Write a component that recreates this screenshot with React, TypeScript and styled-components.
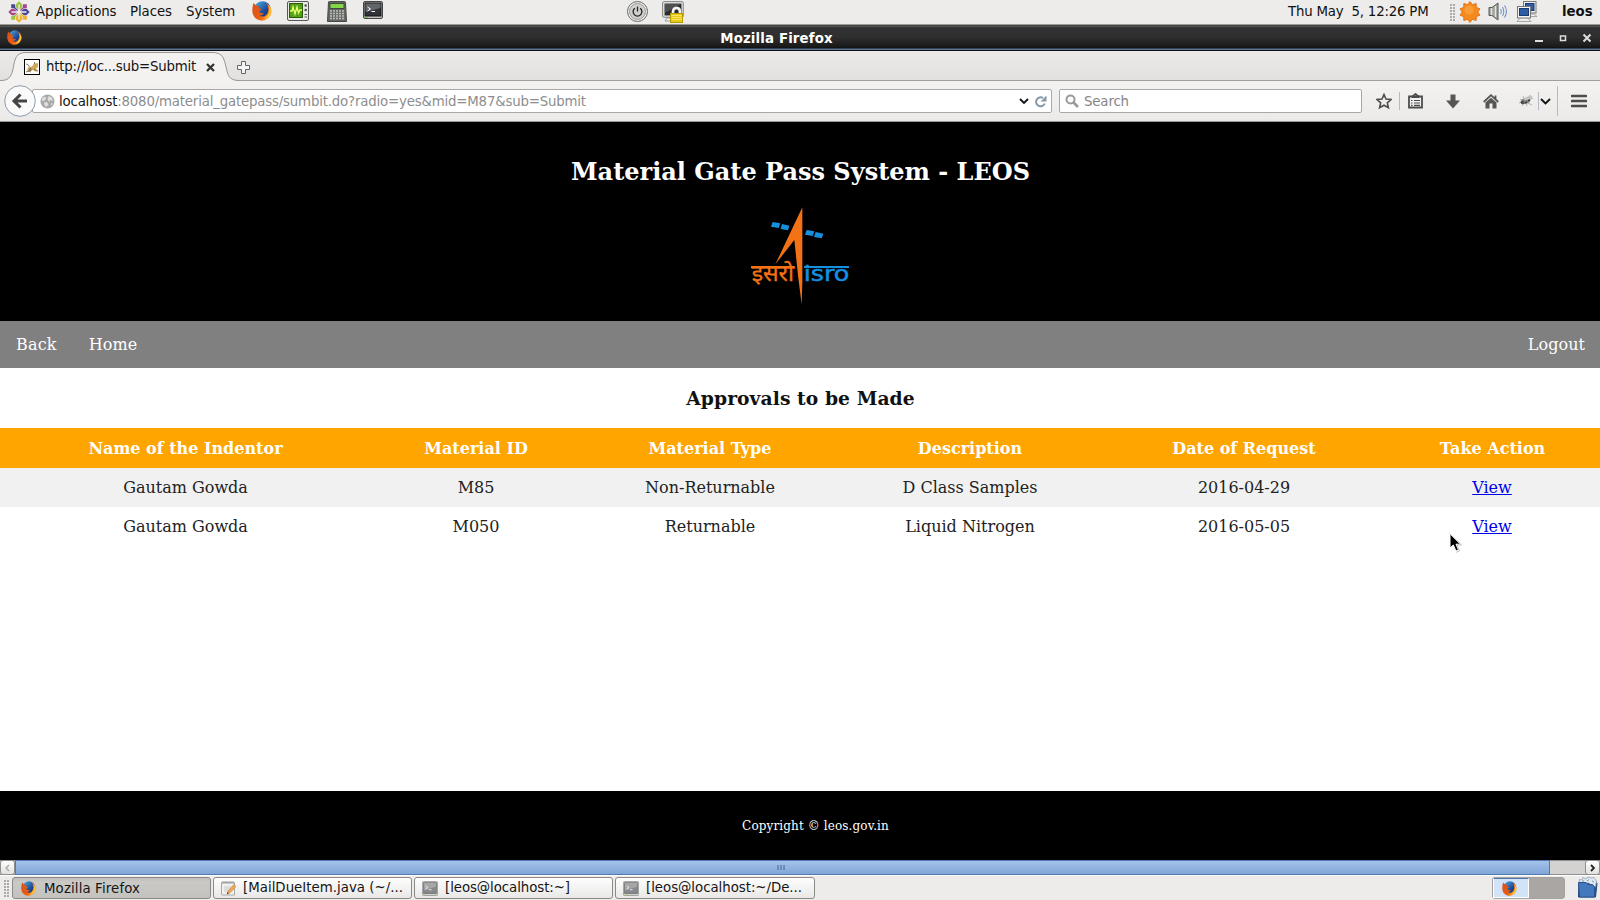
import React from "react";
import styled, { createGlobalStyle } from "styled-components";

const Global = createGlobalStyle`
  * { box-sizing: border-box; }
  body { margin: 0; overflow: hidden; background: #fff; }
`;

const Desktop = styled.div`
  position: relative;
  width: 1600px;
  height: 900px;
  display: flex;
  flex-direction: column;
  overflow: hidden;
  font-family: "DejaVu Sans", sans-serif;
  font-size: 13.33px;
  color: #1a1a1a;
  svg { display: block; flex: none; }
`;

const Label = styled.span<{ $ls?: number }>`
  white-space: pre;
  letter-spacing: ${(p) => p.$ls ?? 0}px;
`;

const Gap = styled.div<{ $w: number }>`
  flex: none;
  width: ${(p) => p.$w}px;
`;

/* ---------- desktop panel ---------- */
const TopPanel = styled.div`
  height: 25px;
  flex: none;
  display: flex;
  align-items: flex-start;
  justify-content: space-between;
  background: #edeceb;
  border-bottom: 1px solid #9b9b97;
  line-height: 24px;
`;
const PanelGroup = styled.div`
  display: flex;
  height: 24px;
  align-items: flex-start;
  svg { margin-top: 1px; }
`;
const MenuItem = styled.div<{ $w: number; $ls?: number }>`
  width: ${(p) => p.$w}px;
  letter-spacing: ${(p) => p.$ls ?? -0.08}px;
  flex: none;
  white-space: pre;
  color: #111;
`;
const UserName = styled.div`
  font-weight: bold;
  color: #111;
  width: 38px;
`;
const Grip = styled.div`
  width: 5px;
  height: 17px;
  margin-top: 4px;
  background-image: radial-gradient(circle at 1px 1px, #aaa 0.8px, transparent 1px);
  background-size: 3px 3px;
`;

/* ---------- window ---------- */
const TitleBar = styled.div`
  height: 26px;
  flex: none;
  display: flex;
  align-items: center;
  position: relative;
  padding-left: 7px;
  background: linear-gradient(#1d1d1d 0, #6a6a68 1px, #3a3a3a 2px, #313131 3px, #2f2f2f 12px, #191919 22px, #0d0f12 23px, #5b7594 24px, #5b7594 25px);
  border-bottom: 1px solid #0c1118;
`;
const WindowTitle = styled.div`
  flex: 1;
  text-align: center;
  color: #fff;
  font-weight: bold;
  line-height: 24px;
  letter-spacing: 0.14px;
  padding: 2px 0 0 5px;
`;
const Controls = styled.div`
  display: flex;
  width: 74px;
`;
const TabBar = styled.div`
  height: 30px;
  flex: none;
  position: relative;
  display: flex;
  background: linear-gradient(#ebeae9, #e2e1e0);
  border-bottom: 1px solid #a09f9d;
`;
const TabShape = styled.div`
  position: absolute;
  left: 0;
  top: 0;
`;
const TabContent = styled.div`
  position: relative;
  display: flex;
  align-items: center;
  height: 30px;
  padding-left: 24px;
  padding-top: 2px;
`;
const TabLabel = styled.div`
  width: 160px;
  margin-left: 6px;
  line-height: 26px;
  letter-spacing: -0.22px;
  color: #151515;
`;
const NavBar = styled.div`
  height: 41px;
  flex: none;
  position: relative;
  display: flex;
  align-items: center;
  background: linear-gradient(#f3f2f1, #eceae8);
  border-bottom: 1px solid #989793;
`;
const BackButton = styled.div`
  position: absolute;
  left: 4px;
  top: 4px;
`;
const UrlBox = styled.div`
  display: flex;
  align-items: center;
  width: 1020px;
  height: 24px;
  margin-left: 32px;
  padding-left: 7px;
  background: #fff;
  border: 1px solid #aaa8a6;
  border-radius: 2px;
  color: #8d8d8d;
  b { font-weight: normal; color: #151515; }
`;
const UrlText = styled.div`
  flex: 1;
  padding: 2px 0 0 4px;
  letter-spacing: -0.182px;
  line-height: 20px;
`;
const SearchBox = styled.div`
  display: flex;
  align-items: center;
  width: 303px;
  height: 24px;
  margin-left: 7px;
  padding-left: 5px;
  gap: 5px;
  background: #fff;
  border: 1px solid #aaa8a6;
  border-radius: 2px;
  color: #858585;
  line-height: 20px;
  letter-spacing: -0.15px;
  span { padding-top: 2px; }
`;
const Divider = styled.div<{ $h: number }>`
  width: 1px;
  height: ${(p) => p.$h}px;
  background: #b5bac0;
`;

/* ---------- page ---------- */
const Page = styled.div`
  height: 738px;
  flex: none;
  display: flex;
  flex-direction: column;
  background: #fff;
  font-family: "DejaVu Serif", serif;
  font-size: 16px;
`;
const Header = styled.header`
  height: 199px;
  flex: none;
  background: #000;
  color: #fff;
  display: flex;
  flex-direction: column;
  align-items: center;
`;
const Title = styled.h1`
  margin: 35px 0 0;
  padding-left: 1px;
  height: 38px;
  font-size: 24px;
  line-height: 30px;
`;
const PageNav = styled.nav`
  height: 47px;
  flex: none;
  display: flex;
  justify-content: space-between;
  padding: 0 15px 0 16px;
  line-height: 48px;
  background: #808080;
  color: #fff;
`;
const NavLinks = styled.div`
  display: flex;
  gap: 32px;
`;
const Subtitle = styled.h3`
  margin: 0;
  height: 60px;
  line-height: 61px;
  text-align: center;
  font-size: 18.72px;
  letter-spacing: 0.07px;
  padding-left: 1px;
  color: #111;
`;
const Table = styled.table`
  width: 1600px;
  table-layout: fixed;
  border-collapse: collapse;
  text-align: center;
  color: #222;
`;
const Th = styled.th<{ $w: number }>`
  width: ${(p) => p.$w}px;
  height: 40px;
  padding: 0;
  background: #ffa500;
  color: #fff;
  &:last-child { padding-right: 2px; }
`;
const Tr = styled.tr<{ $odd: boolean }>`
  background: ${(p) => (p.$odd ? "#f1f1f1" : "#fff")};
`;
const Td = styled.td`
  height: 39px;
  padding: 0 0 1px;
  a { color: #0000ee; text-decoration: underline; }
  &:last-child { padding-right: 3px; }
`;
const Footer = styled.footer`
  height: 69px;
  margin-top: auto;
  background: #000;
  color: #fff;
  text-align: center;
  font-size: 12px;
  line-height: 70px;
  letter-spacing: 0.12px;
  padding-left: 31px;
`;
const Pointer = styled.div`
  position: absolute;
  left: 1449px;
  top: 533px;
`;

/* ---------- bottom ---------- */
const ScrollBar = styled.div`
  height: 15px;
  flex: none;
  display: flex;
  background: #d3d2d0;
  border-top: 1px solid #8f8f8f;
  border-bottom: 1px solid #8f8f8f;
`;
const Arrow = styled.div<{ $dim?: boolean }>`
  width: 15px;
  border: 1px solid #918f8c;
  border-radius: 3px;
  margin: -1px 0;
  background: linear-gradient(#fff, #e2e1e0);
  color: ${(p) => (p.$dim ? "#aaa" : "#222")};
  display: flex;
  align-items: center;
  justify-content: center;
`;
const Thumb = styled.div`
  width: 1535px;
  margin: -1px 0;
  border: 1px solid #5379ad;
  background: linear-gradient(#a5c3ea, #80a6d8);
  display: flex;
  align-items: center;
  justify-content: center;
  padding-right: 3px;
`;
const Track = styled.div`
  flex: 1;
`;
const Taskbar = styled.div`
  height: 25px;
  flex: none;
  display: flex;
  background: #edeceb;
  border-top: 1px solid #fff;
`;
const Task = styled.div<{ $active?: boolean; $w?: number }>`
  display: flex;
  align-items: center;
  width: ${(p) => p.$w ?? 199}px;
  height: 22px;
  margin: 1px 2px 0 0;
  padding-left: ${(p) => (p.$active ? 8 : 7)}px;
  border: 1px solid #8c8a87;
  border-radius: 3px;
  background: ${(p) => (p.$active ? "linear-gradient(#bfbdba, #cbc9c6 4px, #c4c2bf)" : "linear-gradient(#fefefe, #e9e8e7)")};
  color: #151515;
  span { margin-left: ${(p) => (p.$active ? 8 : 7)}px; margin-top: ${(p) => (p.$active ? 0 : -2)}px; }
`;
const Workspaces = styled.div`
  display: flex;
  width: 73px;
  height: 22px;
  margin: 1px 12px 0 auto;
  border: 1px solid #a5a29f;
  border-radius: 3px;
  background: #aaa6a3;
`;
const ActiveWorkspace = styled.div`
  width: 36px;
  background: #d2e2f7;
  border: 1px solid #fff;
  border-top-color: #4f78b0;
  display: flex;
  align-items: center;
  justify-content: center;
  padding-right: 4px;
`;

/* ---------- icons ---------- */
const Firefox = ({ size }: { size: number }) => (
  <svg width={size} height={size} viewBox="0 0 20 20">
    <defs>
      <linearGradient id="fxo" x1="0" y1="0.2" x2="1" y2="0.8">
        <stop offset="0" stopColor="#d9531a" />
        <stop offset=".55" stopColor="#ea5c12" />
        <stop offset="1" stopColor="#ffb52a" />
      </linearGradient>
      <linearGradient id="fxb" x1="0" y1="0" x2="1" y2="1">
        <stop offset="0" stopColor="#4fb2e4" />
        <stop offset=".6" stopColor="#1c4c9a" />
        <stop offset="1" stopColor="#0c2560" />
      </linearGradient>
    </defs>
    <circle cx="10.500" cy="8.400" r="8.200" fill="url(#fxb)" />
    <path d="M1.500 2Q3 3 4 4.800Q5.800 4.200 7.300 5.300L6.300 7.200Q9 7.200 9.500 8.300L7 10Q7.500 12.800 12 12Q10.500 15 7.500 13.900Q10.500 17 14 14.300Q17.300 11 16 6Q15.500 3.500 14 2Q17.600 3.500 19 7.500Q20.600 13 16.500 17Q11.500 21.400 5.500 18.500Q.3 15.500 .3 9.500Q.3 5.500 1.500 2Z" fill="url(#fxo)" />
    <path d="M16 3.500Q20.300 8 18.300 13Q16.400 17.600 11.500 18.400Q16 15.600 17.300 11Q17.800 7.500 16 3.500Z" fill="#ffcb35" />
  </svg>
);

const quarters = [
  { corner: "#a6458f", arrow: "#9bc43c" },
  { corner: "#f0b02c", arrow: "#4a4796" },
  { corner: "#9bc43c", arrow: "#f0b02c" },
  { corner: "#4a4796", arrow: "#a6458f" },
];
const CentOS = () => (
  <svg width="22" height="22" viewBox="-11 -11 22 22">
    {quarters.map((q, i) => (
      <g key={i} transform={`rotate(${i * 90})`}>
        <path d="M4 -7.800H7.800V-4L4.800 -3.800L1.800 -1L1 -1.800L3.800 -4.800Z" fill={q.corner} />
        <path d="M-3.200 -7.500L0 -10.700L3.200 -7.500V-5L.7 -2V-7.500H-.7V-2L-3.200 -5Z" fill={q.arrow} />
      </g>
    ))}
  </svg>
);

const MonitorIcon = () => (
  <svg width="22" height="21" viewBox="0 0 22 21">
    <rect x=".5" y=".5" width="21" height="19" rx="1.500" fill="#e9e9e5" stroke="#555753" />
    <rect x="2.500" y="2.500" width="13" height="14" fill="#4b9b12" stroke="#2f5c0c" />
    <path d="M3 6H15M3 9.500H15M3 13H15M6 3V16M9 3V16M12 3V16" stroke="#72bb35" strokeWidth=".6" />
    <path d="M3 10H5L6 6L8 13L10 6L11.500 12L13 9H15" fill="none" stroke="#eaff70" strokeWidth="1.300" />
    <circle cx="18.700" cy="4.500" r="1.300" fill="#555" /><circle cx="18.700" cy="9" r="1.300" fill="#555" />
    <path d="M17.500 13.500H20M17.500 16H20" stroke="#555" strokeWidth="1.200" />
  </svg>
);

const Calculator = () => (
  <svg width="20" height="21" viewBox="0 0 20 21">
    <path d="M1.500 1Q1.500 .5 2.500 .5H17.500Q18.500 .5 18.500 1.500L19.500 20.500H.5Z" fill="#666864" stroke="#464844" />
    <rect x="3" y="2.500" width="14" height="5" fill="#83d747" stroke="#40463b" />
    {[10, 12.500, 15, 17.500].map((y) => (
      <path key={y} d={`M3 ${y}H17.500`} stroke="#bdbfba" strokeWidth="1.400" strokeDasharray="2 1" />
    ))}
  </svg>
);

const Terminal = ({ w = 20, h = 18, dim = false }: { w?: number; h?: number; dim?: boolean }) => (
  <svg width={w} height={h} viewBox="0 0 20 18" preserveAspectRatio="none" opacity={dim ? 0.55 : 1}>
    <rect x=".5" y=".5" width="19" height="17" rx="1.500" fill="#c3c4c0" stroke="#444" />
    <rect x="2" y="2" width="16" height="13" fill="#30343a" stroke="#111" />
    <path d="M2.500 2.500H17.500V7L2.500 11Z" fill="#62666a" />
    <path d="M4.500 6L7.500 8L4.500 10M8.500 10.500H12" fill="none" stroke="#fff" />
    <path d="M2 16.500H5" stroke="#73d216" />
  </svg>
);

const Power = () => (
  <svg width="21" height="22" viewBox="0 0 21 22">
    <circle cx="10.500" cy="10.500" r="10" fill="#f1f1ef" stroke="#666" />
    <circle cx="10.500" cy="10.500" r="8" fill="#cfcfcd" stroke="#999" />
    <path d="M7.800 7.200A4.400 4.400 0 1 0 13.200 7.200M10.500 5.500V10.500" fill="none" stroke="#222" strokeWidth="1.300" />
  </svg>
);

const LockScreen = () => (
  <svg width="22" height="22" viewBox="0 0 22 22">
    <path d="M5 17H15L17 20H3Z" fill="#f4f4f2" stroke="#999" />
    <rect x=".7" y=".7" width="20.500" height="15.500" rx="1" fill="#f2f2f2" stroke="#777" />
    <rect x="2.500" y="2.500" width="17" height="12" fill="#2b2b2b" />
    <path d="M3 3H19L3 12Z" fill="#505050" />
    <path d="M11 13V11Q11 7 14.500 7T18 11V13" fill="none" stroke="#777" strokeWidth="3.200" />
    <path d="M11 13V11Q11 7 14.500 7T18 11V13" fill="none" stroke="#f4f4f4" strokeWidth="2.400" />
    <rect x="8.500" y="12.500" width="12" height="9" fill="#e9cb16" stroke="#b89b00" />
    <path d="M9.500 14.500H19.500M9.500 16.500H19.500M9.500 18.500H19.500" stroke="#fff08a" strokeWidth=".7" />
  </svg>
);

const sunPoints = Array.from({ length: 20 }, (_, i) => {
  const r = i % 2 ? 7.8 : 10.5;
  const a = (i * Math.PI) / 10;
  return `${(11 + r * Math.sin(a)).toFixed(1)},${(11 - r * Math.cos(a)).toFixed(1)}`;
}).join(" ");
const Sun = () => (
  <svg width="22" height="22" viewBox="0 0 22 22">
    <polygon points={sunPoints} fill="#f58a1f" stroke="#d9690b" strokeWidth=".8" />
    <circle cx="10" cy="9" r="4.500" fill="#fba445" opacity=".7" />
  </svg>
);

const Speaker = () => (
  <svg width="20" height="21" viewBox="0 0 20 21">
    <path d="M1 6.500H4L10 2V19L4 14.500H1Z" fill="#a2a49f" stroke="#555753" />
    <path d="M3.500 7V14M7.500 5V16" stroke="#e6e6e4" strokeWidth="1.300" />
    <path d="M12.500 8Q14 10.500 12.500 13M14.500 6Q17 10.500 14.500 15M16.500 4.500Q20.500 10.500 16.500 16.500" fill="none" stroke="#7296c8" strokeWidth="1.100" />
  </svg>
);

const Network = () => (
  <svg width="22" height="22" viewBox="0 0 22 22">
    <path d="M13 13H18L21 15.500H13Z" fill="#eee" stroke="#888" strokeWidth=".7" />
    <rect x="7.500" y=".5" width="12.500" height="11.500" fill="#eee" stroke="#777" />
    <rect x="9.500" y="2.500" width="8.500" height="7" fill="#2d5da4" stroke="#183c72" />
    <path d="M5 16.500H11L15 20.500H1Z" fill="#eee" stroke="#888" strokeWidth=".7" />
    <rect x="1.500" y="5.500" width="13" height="11.500" fill="#f4f4f4" stroke="#777" />
    <rect x="3.500" y="7.500" width="9" height="7" fill="#2d5da4" stroke="#183c72" />
  </svg>
);

const Favicon = () => (
  <svg width="16" height="16" viewBox="0 0 16 16">
    <rect x=".5" y=".5" width="15" height="15" fill="#fff" stroke="#000" />
    <path d="M4 8.500L8 7.500L10 4.500L10.500 3L11.500 4.500L14 4V8L12 9.500L13.500 12.500H11L9 11L5 12.500L3 11.500Z" fill="#d2a75b" />
    <path d="M2 5L4 5.500L5.500 8M2 13L5 12L7 13M10 10L14 12M10.500 3V5" fill="none" stroke="#7c7057" strokeWidth=".9" />
    <path d="M6 8L8 11L4 13Z" fill="#847553" />
  </svg>
);

const Bug = () => (
  <svg width="16" height="14" viewBox="0 0 16 14">
    <path d="M2 5L14 11M5 2L9 12M1 9L15 4M4 12L12 1" stroke="#999" strokeWidth=".7" />
    <ellipse cx="7.500" cy="7" rx="5" ry="2.800" transform="rotate(-18 7.500 7)" fill="#80817c" />
    <ellipse cx="10" cy="4" rx="4.500" ry="1.500" transform="rotate(-20 10 4)" fill="#c4c5c3" />
    <circle cx="4.500" cy="8.500" r="1.800" fill="#4d4d4b" />
    <path d="M7 9L9 8M10 6.500L12 6" stroke="#222" strokeWidth="1" />
  </svg>
);

const Globe = () => (
  <svg width="15" height="15" viewBox="0 0 15 15">
    <circle cx="7.500" cy="7.500" r="7" fill="#a9a9a9" />
    <path d="M2 4L5 2.500L6.500 4L4.500 6.500L2 7ZM8.500 2L12 3.500L13 7L10.500 6L9 8L7.500 5ZM4 8.500L7 8L8.500 10.500L6.500 13L4.500 11.500ZM11 9L13 9.500L11.500 12Z" fill="#dedede" />
  </svg>
);

const Notepad = () => (
  <svg width="15" height="16" viewBox="0 0 15 16">
    <path d="M.5 2.500H13.500V15H1.500Q.5 15 .5 14Z" fill="#f0f0ee" stroke="#aaa" />
    <path d="M2 1V4M4 1V4M6 1V4M8 1V4M10 1V4M12 1V4" stroke="#999" strokeWidth=".9" />
    <path d="M3 7H10M3 9H9M3 11H8" stroke="#ccc" />
    <path d="M6 14L7 11L13 4.500L15 6.500L9 12.800Z" fill="#f4a84b" stroke="#b87e46" strokeWidth=".6" />
    <path d="M6 14L6.600 12.200L7.900 13.400Z" fill="#333" />
  </svg>
);

const Trash = () => (
  <svg width="21" height="22" viewBox="0 0 21 22">
    <path d="M2 7L1.500 21H18.500L20 7Z" fill="#315e9d" stroke="#1d4075" />
    <path d="M2 7L2.500 3.500L5 4L6 1.500L9 3L11 1L14 2L17 1.500L19.500 5L18.500 11L15 10L12 7Z" fill="#dfe8f1" stroke="#8896a8" strokeWidth=".7" />
    <path d="M5 5.500L7 4.500M10 5L12 3.500M15 5L17 6" stroke="#7b93ad" />
    <path d="M1.500 6.500H9L11 8.500H15.500L17.500 11V21H2.500Z" fill="#4478bd" stroke="#28528d" />
  </svg>
);

const IsroLogo = () => (
  <svg width="140" height="120" viewBox="0 0 420 360">
    <path d="M217 37V262L215 328L205 250L193 135L136 208Z" fill="#f47216" />
    <g fill="#158fe0">
      <path d="M128 81L151 85L146 99L123 95ZM156 87L178 92L174 106L152 102ZM230 105L253 109L248 123L225 119ZM257 111L280 116L275 130L252 126Z" />
      <rect x="222" y="213" width="135" height="6" />
    </g>
    <rect x="63" y="213" width="131" height="6" fill="#f47216" />
    <text x="65" y="257" fontFamily="'Noto Sans Devanagari','Noto Sans',sans-serif" fontSize="68" textLength="127" lengthAdjust="spacingAndGlyphs" fill="#f47216" stroke="#f47216">इसरो</text>
    <text x="221" y="257" fontFamily="'DejaVu Sans',sans-serif" fontSize="62" textLength="137" lengthAdjust="spacingAndGlyphs" fill="#158fe0" stroke="#158fe0" strokeWidth="1.500">isro</text>
  </svg>
);

const columns: [string, number][] = [
  ["Name of the Indentor", 371],
  ["Material ID", 210],
  ["Material Type", 258],
  ["Description", 262],
  ["Date of Request", 286],
  ["Take Action", 213],
];
const rows = [
  ["Gautam Gowda", "M85", "Non-Returnable", "D Class Samples", "2016-04-29"],
  ["Gautam Gowda", "M050", "Returnable", "Liquid Nitrogen", "2016-05-05"],
];

export default function App() {
  return (
    <Desktop>
      <Global />
      <TopPanel>
        <PanelGroup>
          <Gap $w={8} />
          <CentOS />
          <Gap $w={6} />
          <MenuItem $w={94}>Applications</MenuItem>
          <MenuItem $w={56}>Places</MenuItem>
          <MenuItem $w={66}>System</MenuItem>
          <Firefox size={20} />
          <Gap $w={15} />
          <MonitorIcon />
          <Gap $w={18} />
          <Calculator />
          <Gap $w={16} />
          <Terminal />
          <Gap $w={244} />
          <Power />
          <Gap $w={14} />
          <LockScreen />
        </PanelGroup>
        <PanelGroup>
          <MenuItem $w={162} $ls={-0.2}>Thu May  5, 12:26 PM</MenuItem>
          <Grip />
          <Gap $w={4} />
          <Sun />
          <Gap $w={7} />
          <Speaker />
          <Gap $w={8} />
          <Network />
          <Gap $w={24} />
          <UserName>leos</UserName>
        </PanelGroup>
      </TopPanel>

      <TitleBar>
        <Firefox size={15} />
        <WindowTitle>Mozilla Firefox</WindowTitle>
        <Controls>
          <svg width="74" height="14" viewBox="0 0 74 14">
            <path d="M9 10H17" stroke="#ddd" strokeWidth="2" />
            <rect x="34.500" y="5" width="5" height="4.500" fill="none" stroke="#ddd" strokeWidth="1.500" />
            <path d="M57.500 3.500L64.500 10.500M64.500 3.500L57.500 10.500" stroke="#ddd" strokeWidth="2" />
          </svg>
        </Controls>
      </TitleBar>
      <TabBar>
        <TabShape>
          <svg width="245" height="30" viewBox="0 0 245 30">
            <path d="M0 29.500C8 29.500 11 27 13 18C15 7 16 1.500 26 1.500H212C223 1.500 224 7 226.500 18C228.500 27 231 29.500 240 29.500V30H0Z" fill="#f3f2f1" />
            <path d="M0 29.500C8 29.500 11 27 13 18C15 7 16 1.500 26 1.500H212C223 1.500 224 7 226.500 18C228.500 27 231 29.500 240 29.500" fill="none" stroke="#979694" />
          </svg>
        </TabShape>
        <TabContent>
          <Favicon />
          <TabLabel>http://loc...sub=Submit</TabLabel>
          <svg width="9" height="9" viewBox="0 0 9 9"><path d="M1 1L8 8M8 1L1 8" stroke="#333" strokeWidth="2.300" /></svg>
          <Gap $w={22} />
          <svg width="13" height="13" viewBox="0 0 13 13"><path d="M4.500 .5H8.500V4.500H12.500V8.500H8.500V12.500H4.500V8.500H.5V4.500H4.500Z" fill="#f4f4f4" stroke="#666" /></svg>
        </TabContent>
      </TabBar>
      <NavBar>
        <UrlBox>
          <Globe />
          <UrlText><b>localhost</b>:8080/material_gatepass/sumbit.do?radio=yes&amp;mid=M87&amp;sub=Submit</UrlText>
          <svg width="10" height="7" viewBox="0 0 10 7"><path d="M1 1L5 5L9 1" fill="none" stroke="#111" strokeWidth="1.800" /></svg>
          <Gap $w={6} />
          <svg width="12" height="13" viewBox="0 0 12 13"><path d="M9.800 8.500A4.500 4.500 0 1 1 8 3" fill="none" stroke="#8698a6" strokeWidth="2" /><path d="M11.500 .5V6.500H5.500Z" fill="#8698a6" /></svg>
          <Gap $w={4} />
        </UrlBox>
        <BackButton>
          <svg width="32" height="32" viewBox="0 0 32 32">
            <circle cx="16" cy="16" r="15.300" fill="#fafafa" stroke="#8d9bad" />
            <path d="M16.500 9.500L10 16L16.500 22.500M10.500 16H23" fill="none" stroke="#444" strokeWidth="3" />
          </svg>
        </BackButton>
        <SearchBox>
          <svg width="14" height="14" viewBox="0 0 14 14"><circle cx="5.500" cy="5.500" r="4" fill="none" stroke="#999" strokeWidth="2" /><path d="M8.500 8.500L13 13" stroke="#999" strokeWidth="2.500" /></svg>
          <span>Search</span>
        </SearchBox>
        <Gap $w={14} />
        <svg width="16" height="16" viewBox="0 0 16 16"><path d="M8 1.500L10 6L15 6.500L11.300 9.800L12.400 14.700L8 12.200L3.600 14.700L4.700 9.800L1 6.500L6 6Z" fill="none" stroke="#4d4d4d" strokeWidth="1.600" /></svg>
        <Gap $w={7} />
        <Divider $h={18} />
        <Gap $w={8} />
        <svg width="15" height="16" viewBox="0 0 15 16"><path d="M1 3.500H4.500L7.500 1L10.500 3.500H14V14.500H1Z" fill="#f2f2f2" stroke="#4d4d4d" strokeWidth="1.800" /><path d="M3.500 2.500H11.500V5H3.500Z" fill="#4d4d4d" /><path d="M3 7.500H4.500M6 7.500H12M3 10H4.500M6 10H12M3 12.300H4.500M6 12.300H12" stroke="#4d4d4d" strokeWidth="1.200" /></svg>
        <Gap $w={23} />
        <svg width="14" height="15" viewBox="0 0 14 15"><path d="M4.500 .5H9.500V6.500H14L7 14.500L0 6.500H4.500Z" fill="#555" /></svg>
        <Gap $w={23} />
        <svg width="16" height="15" viewBox="0 0 16 15"><path d="M.7 8L8 1.200L15.300 8M12.500 1.500V5" fill="none" stroke="#555" strokeWidth="1.800" /><path d="M2.500 8.500L8 3.800L13.500 8.500V14.500H9.500V9.500H6.500V14.500H2.500Z" fill="#555" /></svg>
        <Gap $w={19} />
        <Bug />
        <Gap $w={4} />
        <Divider $h={18} />
        <Gap $w={1} />
        <svg width="11" height="7" viewBox="0 0 11 7"><path d="M1 1L5.500 5.500L10 1" fill="none" stroke="#111" strokeWidth="1.800" /></svg>
        <Gap $w={6} />
        <Divider $h={30} />
        <Gap $w={13} />
        <svg width="16" height="14" viewBox="0 0 16 14"><path d="M1 2H15M1 7H15M1 12H15" stroke="#4d4d4d" strokeWidth="2.600" strokeLinecap="round" /></svg>
      </NavBar>

      <Page>
        <Header>
          <Title>Material Gate Pass System - LEOS</Title>
          <IsroLogo />
        </Header>
        <PageNav>
          <NavLinks>
            <Label $ls={0.2}>Back</Label>
            <Label $ls={0.1}>Home</Label>
          </NavLinks>
          <Label $ls={0.05}>Logout</Label>
        </PageNav>
        <Subtitle>Approvals to be Made</Subtitle>
        <Table>
          <thead>
            <tr>
              {columns.map(([name, w]) => (
                <Th key={name} $w={w}>{name}</Th>
              ))}
            </tr>
          </thead>
          <tbody>
            {rows.map((row, i) => (
              <Tr key={row[1]} $odd={i % 2 === 0}>
                {row.map((cell) => (
                  <Td key={cell}>{cell}</Td>
                ))}
                <Td><a>View</a></Td>
              </Tr>
            ))}
          </tbody>
        </Table>
        <Footer>Copyright © leos.gov.in</Footer>
      </Page>

      <ScrollBar>
        <Arrow $dim><svg width="5" height="8" viewBox="0 0 5 8"><path d="M4 1L1 4L4 7" fill="none" stroke="currentColor" strokeWidth="1.500" /></svg></Arrow>
        <Thumb><svg width="8" height="5" viewBox="0 0 8 5"><path d="M1 0V5M4 0V5M7 0V5" stroke="#44658f" /></svg></Thumb>
        <Track />
        <Arrow><svg width="5" height="8" viewBox="0 0 5 8"><path d="M1 1L4 4L1 7" fill="none" stroke="currentColor" strokeWidth="1.800" /></svg></Arrow>
      </ScrollBar>
      <Taskbar>
        <Gap $w={4} />
        <Grip />
        <Gap $w={3} />
        <Task $active><Firefox size={15} /><Label $ls={0.12}>Mozilla Firefox</Label></Task>
        <Task><Notepad /><Label $ls={0.02}>[MailDueItem.java (~/...</Label></Task>
        <Task><Terminal w={16} h={15} dim /><Label $ls={-0.07}>[leos@localhost:~]</Label></Task>
        <Task $w={200}><Terminal w={16} h={15} dim /><Label $ls={-0.03}>[leos@localhost:~/De...</Label></Task>
        <Workspaces>
          <ActiveWorkspace><Firefox size={15} /></ActiveWorkspace>
        </Workspaces>
        <Trash />
        <Gap $w={2} />
      </Taskbar>
      <Pointer>
        <svg width="15" height="21" viewBox="0 0 15 21">
          <path d="M1 1V15L4.300 12L7 18L9.500 17L7 11.200H11.500Z" fill="#000" stroke="#fff" />
          <path d="M.5 .5L12.500 12H8L10.500 18L7 19.300" fill="none" stroke="#999" strokeWidth=".6" />
        </svg>
      </Pointer>
    </Desktop>
  );
}
